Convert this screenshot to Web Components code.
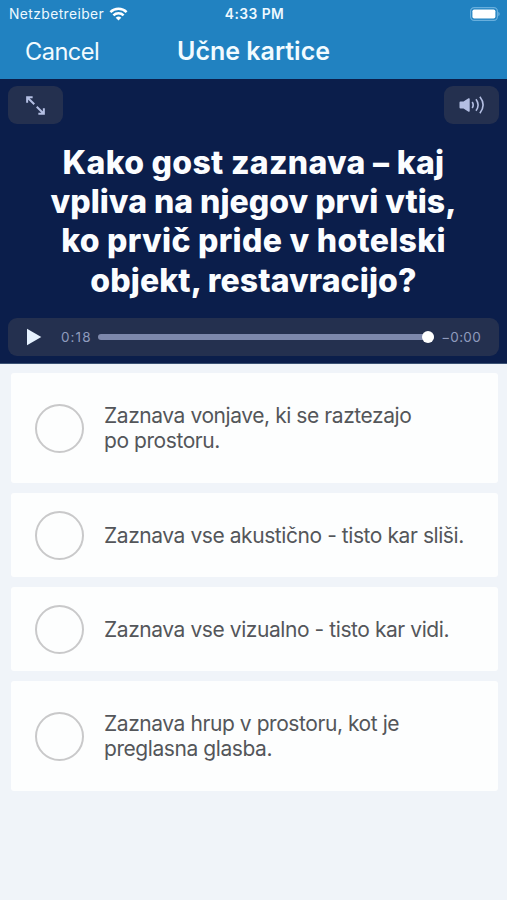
<!DOCTYPE html>
<html lang="sl"><head><meta charset="utf-8"><title>Učne kartice</title>
<style>html,body{margin:0;height:900px;overflow:hidden;background:#f0f4f9;font-family:Inter,"Liberation Sans",sans-serif}</style></head>
<body><flash-app></flash-app>
<script>
const define=(name,html)=>customElements.define(name,class extends HTMLElement{
  constructor(){super();const t=document.createElement('template');t.innerHTML=html;
    this.attachShadow({mode:'open'}).append(t.content.cloneNode(true));}
});
define('status-bar',`<style>
:host{display:grid;grid-template-columns:1fr auto 1fr;align-items:center;height:27px;padding:0 7px 0 9px;color:#eef9ff;font-size:13.8px;line-height:28px;letter-spacing:.43px}
.l{display:flex;align-items:center;gap:5px}.t{font-weight:600}.b{justify-self:end;display:block}svg{display:block}</style>
<div class="l"><span>Netzbetreiber</span><svg width="19" height="14" viewBox="0 0 18 14" fill="none" stroke="#fff" stroke-width="2.5"><path d="M.9 5.2a11.5 11.5 0 0 1 16.2 0M3.9 8.3a7.2 7.2 0 0 1 10.2 0"/><path d="M9 13.6 6.2 10.8a4 4 0 0 1 5.6 0z" fill="#fff" stroke="none"/></svg></div>
<span class="t">4:33 PM</span>
<svg class="b" width="30" height="14" viewBox="0 0 30 14"><rect x=".6" y=".6" width="26.8" height="12.8" rx="3.6" fill="none" stroke="#68afdd" stroke-width="1.2"/><rect x="2.4" y="2.4" width="23" height="9.2" rx="1.8" fill="#fff"/><path d="M28.4 4.8c1.6.8 1.6 3.6 0 4.4z" fill="#79b9e2"/></svg>`);
define('nav-bar',`<style>
:host{display:grid;grid-template-columns:1fr auto 1fr;height:52px;padding:0 25px;line-height:48px;color:#f2fbff;font-size:23.6px}
span{letter-spacing:-.55px;line-height:49px}b{font-weight:600;font-size:25px}</style><span>Cancel</span><b>Učne kartice</b>`);
define('media-button',`<style>:host{display:grid;place-items:center;width:55px;height:38px;border-radius:9px;background:#24304f;color:#b4bfe3}</style><slot></slot>`);
define('audio-player',`<style>
:host{display:flex;align-items:center;height:38px;border-radius:9px;background:#24304f;color:#8f9bbd;font-size:13.5px;padding:0 18px 0 18px;letter-spacing:.3px}
.e{letter-spacing:1.1px}
svg{display:block;margin-right:19px}.bar{flex:1;height:6px;border-radius:3px;background:#7d88ac;margin:0 7px 0 6px;display:flex;align-items:center;justify-content:flex-end}
i{width:12px;height:12px;border-radius:50%;background:#fff}</style>
<svg width="16" height="18" viewBox="0 0 16 18"><path d="M1 .8 15.3 9 1 17.2z" fill="#e6f2ff"/></svg><span class="e">0:18</span><div class="bar"><i></i></div><span>−0:00</span>`);
define('question-panel',`<style>
:host{display:flex;flex-direction:column;height:285px;box-sizing:border-box;padding:7px 8px 7px;background:#0b1e4b;border-bottom:1px solid #3b5274}
.top{display:flex;justify-content:space-between}h1{margin:0;flex:1;padding-top:19px;box-sizing:border-box;color:#fbfdff;text-align:center;font:800 32px/39.2px Inter,sans-serif}h1 span{white-space:nowrap}.w{letter-spacing:.3px}.x{letter-spacing:.1px}svg{display:block}</style>
<div class="top"><media-button><svg width="19" height="19" viewBox="0 0 20 20" fill="none" stroke="currentColor" stroke-width="2.1"><path d="M1.2 7V1.2H7M1.5 1.5l7.2 7.2M18.8 13v5.8H13M18.5 18.5l-7.2-7.2"/></svg></media-button>
<media-button><svg width="26" height="20" viewBox="0 0 26 20" fill="none" stroke="currentColor" stroke-width="1.6"><path d="M.5 7.4q0-1 1-1h3L9.5 3.3q1.2-.5 1.2.6v12.2q0 1.1-1.2.6L4.5 13.6h-3q-1 0-1-1z" fill="currentColor" stroke="none"/><path d="M13.2 7q2 3 0 6M17 4.2q4.2 5.8 0 11.6M20.9 1.8q6.4 8.2 0 16.4"/></svg></media-button></div>
<h1><span class="w">Kako gost zaznava – kaj</span><br><span>vpliva na njegov prvi vtis,</span><br><span class="w">ko prvič pride v hotelski</span><br><span class="x">objekt, restavracijo?</span></h1>
<audio-player></audio-player>`);
define('answer-card',`<style>
:host{display:flex;align-items:center;gap:20px;padding:0 24px;min-height:84px;box-sizing:border-box;background:#fdfefe;border-radius:3px;color:#54565a;font-size:21px;line-height:25.2px;letter-spacing:-.43px}
:host([tall]){min-height:110px}
i{box-sizing:border-box;flex:none;width:49px;height:49px;border:2px solid #c9c9ca;border-radius:50%}</style><i></i><div><slot></slot></div>`);
define('flash-app',`<style>
:host{display:block;height:900px}header{background:#2182c1;height:79px}main{display:grid;grid-template-columns:minmax(0,1fr);gap:9.9px;padding:9.4px 9.5px 0 11px}span{white-space:nowrap}</style>
<header><status-bar></status-bar><nav-bar></nav-bar></header><question-panel></question-panel>
<main><answer-card tall><span>Zaznava vonjave, ki se raztezajo</span><br><span>po prostoru.</span></answer-card>
<answer-card><span>Zaznava vse akustično - tisto kar sliši.</span></answer-card>
<answer-card><span>Zaznava vse vizualno - tisto kar vidi.</span></answer-card>
<answer-card tall><span>Zaznava hrup v prostoru, kot je</span><br><span>preglasna glasba.</span></answer-card></main>`);
</script></body></html>
